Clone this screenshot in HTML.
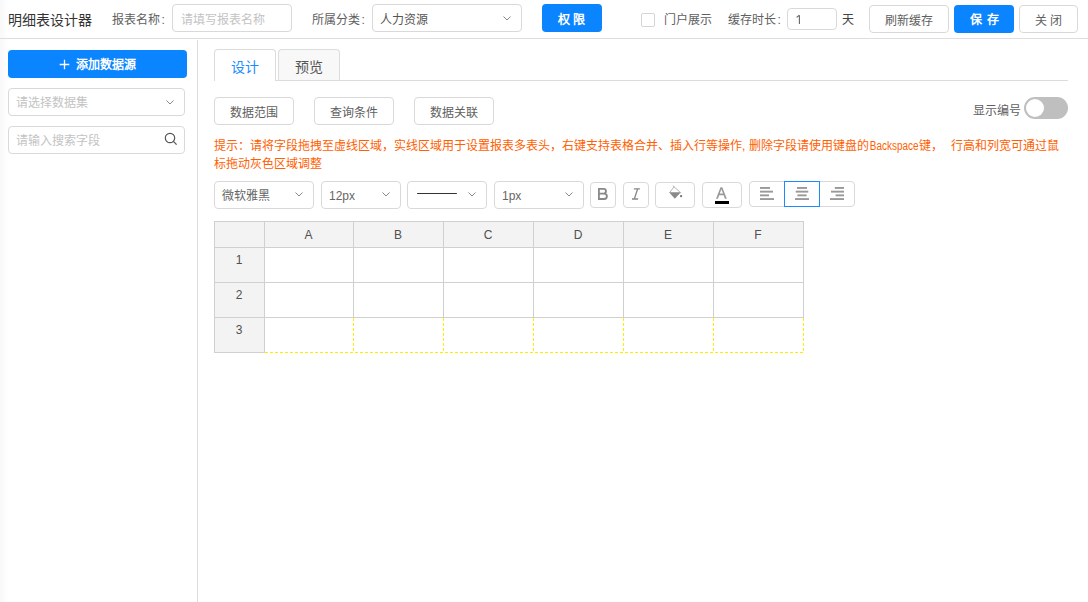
<!DOCTYPE html>
<html lang="zh-CN"><head><meta charset="utf-8">
<style>
*{box-sizing:border-box;margin:0;padding:0}
html,body{width:1088px;height:602px;overflow:hidden;background:#fff;font-family:"Liberation Sans",sans-serif;color:#333}
.a{position:absolute}
.t{position:absolute;white-space:nowrap;line-height:1;font-size:12px}
.lb{color:#606060}
.ph{color:#c3c3c3}
.box{position:absolute;border:1px solid #d9d9d9;border-radius:4px;background:#fff}
.btnb{position:absolute;background:#0a84ff;border-radius:4px}
.wt{position:absolute;white-space:nowrap;line-height:1;color:#fff;font-weight:bold;font-size:13px}
.shadow{position:absolute;left:0;top:0;width:8px;height:602px;background:linear-gradient(to right,#f9f9f9 0,#fafafa 2px,#fcfcfc 5px,#fff 7px)}
svg.a{overflow:visible}
</style></head><body>
<div class="shadow"></div>

<!-- ============ header ============ -->
<div class="t" style="left:8px;top:12.5px;font-size:14px;color:#333">明细表设计器</div>
<div class="t lb" style="left:112px;top:13.5px">报表名称<span style="padding-left:1.5px">:</span></div>
<div class="box" style="left:172px;top:4px;width:120px;height:28px"></div>
<div class="t ph" style="left:181px;top:13.5px">请填写报表名称</div>
<div class="t lb" style="left:312px;top:13.5px">所属分类<span style="padding-left:1.5px">:</span></div>
<div class="box" style="left:372px;top:4px;width:150px;height:28px"></div>
<div class="t" style="left:380px;top:13.5px;color:#555">人力资源</div>
<svg class="a" style="left:503px;top:16px" width="8" height="5"><polyline points="0.5,0.5 4,4 7.5,0.5" fill="none" stroke="#888" stroke-width="1"/></svg>
<div class="btnb" style="left:542px;top:4px;width:60px;height:28px"></div>
<div class="wt" style="left:558px;top:13.5px;font-size:12px">权<span style="display:inline-block;width:3px"></span>限</div>
<div class="box" style="left:641px;top:13px;width:14px;height:14px;border-radius:2px;border-color:#d4d4d4"></div>
<div class="t lb" style="left:664px;top:14px">门户展示</div>
<div class="t lb" style="left:728px;top:14px">缓存时长<span style="padding-left:1.5px">:</span></div>
<div class="box" style="left:787px;top:8px;width:50px;height:22px"></div>
<svg class="a" style="left:795px;top:13px" width="8" height="13"><path d="M4.4 2.2V11M1.6 4.4L4.4 2.2" fill="none" stroke="#666" stroke-width="1.1"/></svg>
<div class="t" style="left:842px;top:14px;color:#444">天</div>
<div class="box" style="left:869px;top:5px;width:80px;height:28px"></div>
<div class="t lb" style="left:885px;top:14.5px">刷新缓存</div>
<div class="btnb" style="left:954px;top:5px;width:60px;height:28px"></div>
<div class="wt" style="left:970px;top:14px;font-size:12px">保<span style="display:inline-block;width:4.5px"></span>存</div>
<div class="box" style="left:1019px;top:5px;width:59px;height:28px"></div>
<div class="t lb" style="left:1035px;top:14.5px">关<span style="display:inline-block;width:3px"></span>闭</div>
<div class="a" style="left:0;top:38px;width:1088px;height:1px;background:#dedede"></div>

<!-- ============ sidebar ============ -->
<div class="btnb" style="left:8px;top:50px;width:179px;height:28px"></div>
<svg class="a" style="left:59px;top:59px" width="11" height="11"><path d="M5.5 0.7V10.3M0.7 5.5H10.3" stroke="#fff" stroke-width="1.3" fill="none"/></svg>
<div class="wt" style="left:76px;top:59px;font-size:12px">添加数据源</div>
<div class="box" style="left:8px;top:88px;width:177px;height:28px"></div>
<div class="t ph" style="left:16px;top:96.5px">请选择数据集</div>
<svg class="a" style="left:166px;top:100px" width="8" height="5"><polyline points="0.5,0.5 4,4 7.5,0.5" fill="none" stroke="#888" stroke-width="1"/></svg>
<div class="box" style="left:8px;top:126px;width:177px;height:28px"></div>
<div class="t ph" style="left:16px;top:134.5px">请输入搜索字段</div>
<svg class="a" style="left:164px;top:132px" width="14" height="14"><circle cx="6" cy="6" r="4.7" fill="none" stroke="#555" stroke-width="1.2"/><path d="M9.4 9.4L12.6 12.6" stroke="#555" stroke-width="1.3"/></svg>
<div class="a" style="left:197px;top:40px;width:1px;height:562px;background:#dedede"></div>

<!-- ============ content ============ -->
<!-- tabs -->
<div class="a" style="left:214px;top:80px;width:854px;height:1px;background:#dcdcdc"></div>
<div class="a" style="left:214px;top:49px;width:62px;height:32px;border:1px solid #dcdcdc;border-bottom:none;border-radius:4px 4px 0 0;background:#fff"></div>
<div class="t" style="left:231px;top:59.5px;font-size:14px;color:#1a8cff">设计</div>
<div class="a" style="left:278px;top:49px;width:62px;height:31px;border:1px solid #dcdcdc;border-bottom:none;border-radius:4px 4px 0 0;background:#f8f8f8"></div>
<div class="t" style="left:295px;top:59.5px;font-size:14px;color:#555">预览</div>

<!-- action buttons -->
<div class="box" style="left:214px;top:97px;width:80px;height:28px"></div>
<div class="t lb" style="left:230px;top:106.5px">数据范围</div>
<div class="box" style="left:314px;top:97px;width:80px;height:28px"></div>
<div class="t lb" style="left:330px;top:106.5px">查询条件</div>
<div class="box" style="left:414px;top:97px;width:80px;height:28px"></div>
<div class="t lb" style="left:430px;top:106.5px">数据关联</div>
<div class="t lb" style="left:973px;top:105px">显示编号</div>
<div class="a" style="left:1024px;top:97px;width:44px;height:22px;border-radius:11px;background:#bfbfbf"></div>
<div class="a" style="left:1026px;top:99px;width:18px;height:18px;border-radius:50%;background:#fff"></div>

<!-- hint -->
<div class="a" style="left:214px;top:136.5px;width:870px;font-size:12px;line-height:18px;color:#ff6000;white-space:nowrap">提示：请将字段拖拽至虚线区域，实线区域用于设置报表多表头，右键支持表格合并、插入行等操作, 删除字段请使用键盘的<span style="display:inline-block;width:50.5px;vertical-align:top"><span style="display:inline-block;transform:scaleX(0.83);transform-origin:0 0;padding-left:1px">Backspace</span></span>键，<span style="display:inline-block;width:8px"></span>行高和列宽可通过鼠<br>标拖动灰色区域调整</div>

<!-- toolbar -->
<div class="box" style="left:214px;top:181px;width:100px;height:28px"></div>
<div class="t" style="left:222px;top:189.5px;color:#666">微软雅黑</div>
<svg class="a" style="left:295px;top:192px" width="8" height="5"><polyline points="0.5,0.5 4,4 7.5,0.5" fill="none" stroke="#888" stroke-width="1"/></svg>
<div class="box" style="left:321px;top:181px;width:80px;height:28px"></div>
<div class="t" style="left:329px;top:189.5px;color:#666">12px</div>
<svg class="a" style="left:382px;top:192px" width="8" height="5"><polyline points="0.5,0.5 4,4 7.5,0.5" fill="none" stroke="#888" stroke-width="1"/></svg>
<div class="box" style="left:407px;top:181px;width:80px;height:28px"></div>
<div class="a" style="left:417px;top:192.6px;width:40px;height:1.8px;border-radius:1px;background:#333"></div>
<svg class="a" style="left:468px;top:192px" width="8" height="5"><polyline points="0.5,0.5 4,4 7.5,0.5" fill="none" stroke="#888" stroke-width="1"/></svg>
<div class="box" style="left:494px;top:181px;width:90px;height:28px"></div>
<div class="t" style="left:502px;top:189.5px;color:#666">1px</div>
<svg class="a" style="left:565px;top:192px" width="8" height="5"><polyline points="0.5,0.5 4,4 7.5,0.5" fill="none" stroke="#888" stroke-width="1"/></svg>
<div class="box" style="left:590px;top:182px;width:26px;height:26px"></div>
<svg class="a" style="left:596px;top:186.2px" width="14" height="16"><path d="M2.9 2.0V13.8 M2.0 2.9H7.6A2.35 2.35 0 0 1 7.6 7.6H2.9 M2.9 7.6H8.2A2.7 2.7 0 0 1 8.2 13H2.0" fill="none" stroke="#888" stroke-width="1.8"/></svg>
<div class="box" style="left:623px;top:182px;width:26px;height:26px"></div>
<svg class="a" style="left:630px;top:186px" width="12" height="16"><path d="M3.9 2.8H9.9 M2 13.0H8.1 M7.7 2.8L4.3 13.0" fill="none" stroke="#888" stroke-width="1.3"/></svg>
<div class="box" style="left:655px;top:182px;width:40px;height:26px"></div>
<svg class="a" style="left:660px;top:180px" width="30" height="25" viewBox="0 0 30 25">
<path d="M9.5 12.7 L14.1 6.8 L20.6 12.7" fill="none" stroke="#aaa" stroke-width="0.9"/>
<path d="M12.8 5.6 L14.3 6.9" stroke="#aaa" stroke-width="0.9"/>
<path d="M9.1 12.3 L20.9 12.3 L14.8 18.7 Z" fill="#8a8a8a"/>
<rect x="20.1" y="15.1" width="2" height="2" fill="#777"/>
</svg>
<div class="box" style="left:702px;top:182px;width:40px;height:26px"></div>
<svg class="a" style="left:714px;top:185px" width="16" height="16"><path d="M2 13.8L6.5 2.2H8.3L12.8 13.8H10.9L9.6 10.2H5.2L3.9 13.8Z M5.8 8.6H9.0L7.4 4.3Z" fill="#999" fill-rule="evenodd"/></svg>
<div class="a" style="left:715px;top:201px;width:14px;height:3px;background:#000"></div>
<div class="box" style="left:749px;top:181px;width:106px;height:26px"></div>
<div class="a" style="left:784px;top:181px;width:36px;height:26px;border:1px solid #1a8cff"></div>
<svg class="a" style="left:760px;top:187px" width="14" height="13" viewBox="0 0 14 13" fill="#999">
<rect x="0" y="0" width="10" height="1.9"/><rect x="0" y="3.7" width="13" height="1.9"/><rect x="0" y="7.4" width="9" height="1.9"/><rect x="0" y="11.1" width="14" height="1.9"/></svg>
<svg class="a" style="left:795px;top:187px" width="14" height="13" viewBox="0 0 14 13" fill="#999">
<rect x="2" y="0" width="10" height="1.9"/><rect x="0.7" y="3.7" width="12.6" height="1.9"/><rect x="2.4" y="7.4" width="9.2" height="1.9"/><rect x="0" y="11.1" width="14" height="1.9"/></svg>
<svg class="a" style="left:830px;top:187px" width="14" height="13" viewBox="0 0 14 13" fill="#999">
<rect x="4.8" y="0" width="9.2" height="1.9"/><rect x="1" y="3.7" width="13" height="1.9"/><rect x="5.6" y="7.4" width="8.4" height="1.9"/><rect x="0" y="11.1" width="14" height="1.9"/></svg>
<!-- table -->
<div class="a" style="left:214px;top:221px;width:590px;height:26px;background:#f3f3f3"></div>
<div class="a" style="left:214px;top:247px;width:50px;height:106px;background:#f3f3f3"></div>
<div class="a" style="left:214px;top:221px;width:590px;height:1px;background:#d0d0d0"></div>
<div class="a" style="left:214px;top:247px;width:590px;height:1px;background:#d0d0d0"></div>
<div class="a" style="left:214px;top:282px;width:590px;height:1px;background:#d0d0d0"></div>
<div class="a" style="left:214px;top:317px;width:590px;height:1px;background:#d0d0d0"></div>
<div class="a" style="left:214px;top:352px;width:51px;height:1px;background:#d0d0d0"></div>
<div class="a" style="left:214px;top:221px;width:1px;height:132px;background:#d0d0d0"></div>
<div class="a" style="left:264px;top:221px;width:1px;height:132px;background:#d0d0d0"></div>
<div class="a" style="left:353px;top:221px;width:1px;height:97px;background:#d0d0d0"></div>
<div class="a" style="left:443px;top:221px;width:1px;height:97px;background:#d0d0d0"></div>
<div class="a" style="left:533px;top:221px;width:1px;height:97px;background:#d0d0d0"></div>
<div class="a" style="left:623px;top:221px;width:1px;height:97px;background:#d0d0d0"></div>
<div class="a" style="left:713px;top:221px;width:1px;height:97px;background:#d0d0d0"></div>
<div class="a" style="left:803px;top:221px;width:1px;height:97px;background:#d0d0d0"></div>
<div class="a" style="left:353px;top:318px;width:1px;height:35px;background:repeating-linear-gradient(to bottom,#ffec00 0 3px,transparent 3px 5px)"></div>
<div class="a" style="left:443px;top:318px;width:1px;height:35px;background:repeating-linear-gradient(to bottom,#ffec00 0 3px,transparent 3px 5px)"></div>
<div class="a" style="left:533px;top:318px;width:1px;height:35px;background:repeating-linear-gradient(to bottom,#ffec00 0 3px,transparent 3px 5px)"></div>
<div class="a" style="left:623px;top:318px;width:1px;height:35px;background:repeating-linear-gradient(to bottom,#ffec00 0 3px,transparent 3px 5px)"></div>
<div class="a" style="left:713px;top:318px;width:1px;height:35px;background:repeating-linear-gradient(to bottom,#ffec00 0 3px,transparent 3px 5px)"></div>
<div class="a" style="left:803px;top:318px;width:1px;height:35px;background:repeating-linear-gradient(to bottom,#ffec00 0 3px,transparent 3px 5px)"></div>
<div class="a" style="left:265px;top:352px;width:539px;height:1px;background:repeating-linear-gradient(to right,#ffec00 0 3px,transparent 3px 5px)"></div>
<div class="t" style="left:264px;width:89px;text-align:center;top:229px;color:#505050">A</div>
<div class="t" style="left:353px;width:90px;text-align:center;top:229px;color:#505050">B</div>
<div class="t" style="left:443px;width:90px;text-align:center;top:229px;color:#505050">C</div>
<div class="t" style="left:533px;width:90px;text-align:center;top:229px;color:#505050">D</div>
<div class="t" style="left:623px;width:90px;text-align:center;top:229px;color:#505050">E</div>
<div class="t" style="left:713px;width:90px;text-align:center;top:229px;color:#505050">F</div>
<div class="t" style="left:214px;width:50px;text-align:center;top:254px;color:#505050">1</div>
<div class="t" style="left:214px;width:50px;text-align:center;top:289px;color:#505050">2</div>
<div class="t" style="left:214px;width:50px;text-align:center;top:324px;color:#505050">3</div>
</body></html>
